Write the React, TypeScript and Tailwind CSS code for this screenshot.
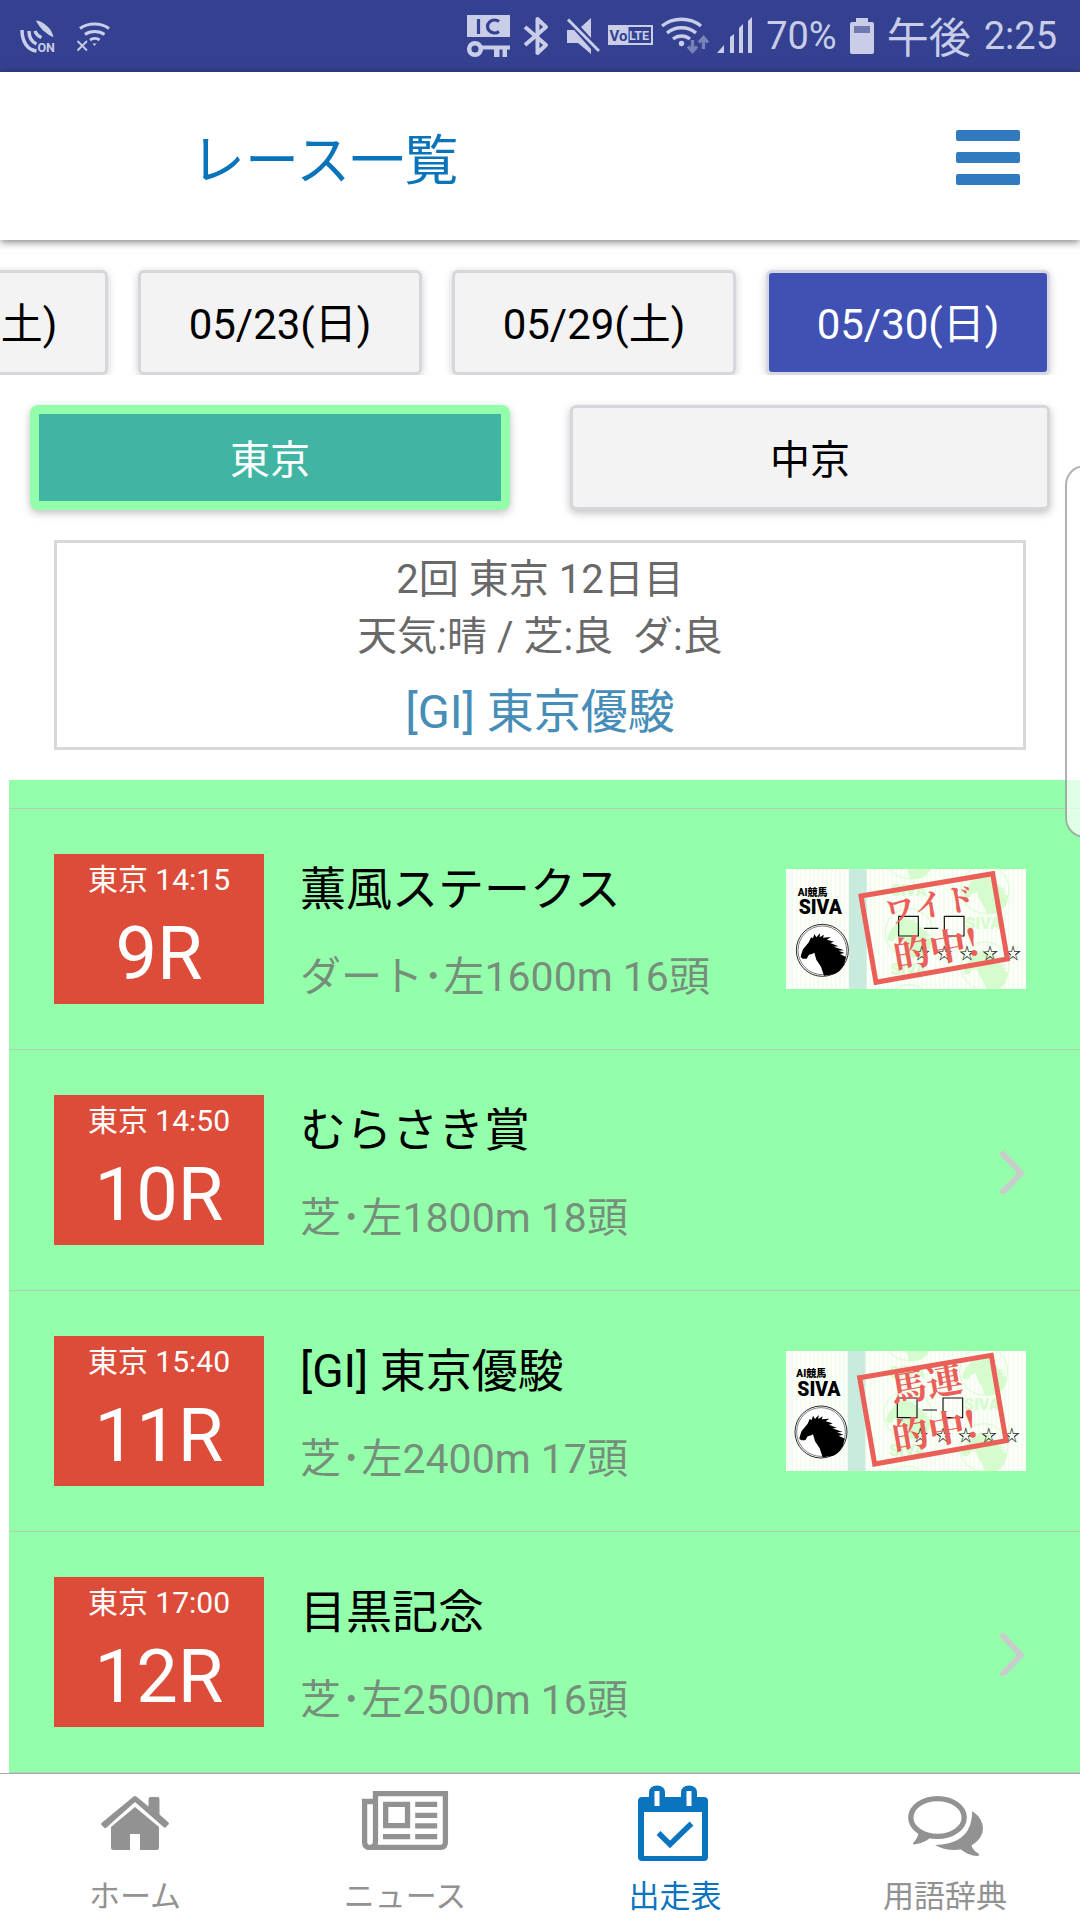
import clsx from "clsx";

const dates = ["05/22(土)", "05/23(日)", "05/29(土)", "05/30(日)"];

const places = ["東京", "中京"];

const races = [
  {
    time: "14:15",
    number: "9R",
    title: "薫風ステークス",
    detail: "ダート･左1600m 16頭",
    hit: "ワイド",
  },
  {
    time: "14:50",
    number: "10R",
    title: "むらさき賞",
    detail: "芝･左1800m 18頭",
  },
  {
    time: "15:40",
    number: "11R",
    title: "[GI] 東京優駿",
    detail: "芝･左2400m 17頭",
    hit: "馬連",
  },
  {
    time: "17:00",
    number: "12R",
    title: "目黒記念",
    detail: "芝･左2500m 16頭",
  },
];

const StatusBar = () => {
  return (
    <div className="flex h-[72px] items-center justify-between bg-[#334190] pr-[23px] pl-5 text-[#c9cde8]">
      <div className="flex items-center gap-5">
        <svg className="h-9 w-9" viewBox="20 19 36 36" fill="currentColor">
          <path d="M36 21.500c8 .5 16 9 17.500 16.500-6-1.500-15-10-17.500-16.500z" />
          <path
            d="M22 31c0 11 5 20 14.500 21M29 32c0 6 3 11 7.500 13M35 32c1 3 3 5 6.500 6.500"
            fill="none"
            stroke="currentColor"
            strokeWidth="3.500"
          />
          <text x="37.500" y="53" fontSize="12.500" fontWeight="700">
            ON
          </text>
        </svg>
        <svg
          className="h-9 w-9"
          viewBox="75 19 36 36"
          fill="none"
          stroke="currentColor"
        >
          <path
            d="M79 29.500c8-6 21-6 29 0M84 35.500c5-4 14-4 19.500 0M89 41c3-2 7-2 9.500 0"
            strokeWidth="3"
          />
          <path d="M91.500 44.500h4l-2 2.500z" fill="currentColor" stroke="none" />
          <path d="M76.500 42l9.500 9.500M86 42l-9.500 9.500" strokeWidth="1.800" />
        </svg>
      </div>
      <div className="flex items-center gap-[13px]">
        <div className="flex items-center gap-2">
          <svg className="h-[44px] w-[46px]" viewBox="466 15 46 44">
            <path d="M466 16h43v22h-43z" fill="currentColor" />
            <path
              d="M477.500 20v15M498 22.500a7 6.500 0 1 0 0 10"
              fill="none"
              stroke="#334190"
              strokeWidth="3.200"
            />
            <circle
              cx="474"
              cy="50"
              r="5.800"
              fill="none"
              stroke="currentColor"
              strokeWidth="4.500"
            />
            <path
              d="M481 46.500h28v4h-3v7.500h-4.500v-7.500h-3v7.500H493v-7.500h-12z"
              fill="currentColor"
            />
          </svg>
          <svg
            className="h-[44px] w-8"
            viewBox="520 15 32 44"
            fill="none"
            stroke="currentColor"
            strokeWidth="4"
            strokeLinejoin="round"
          >
            <path d="M524 28l21 18-8.500 8V20l8.500 8-21 18" />
          </svg>
          <svg
            className="h-[44px] w-[39px]"
            viewBox="560 15 39 44"
            fill="currentColor"
          >
            <path d="M566 31h7l17 19v5L577 44h-11zM580 28l10-9v20z" />
            <path
              d="M567 20.500l31 31.500"
              stroke="currentColor"
              strokeWidth="3"
            />
          </svg>
          <svg className="h-[44px] w-[45px]" viewBox="607 15 45 44">
            <path d="M607 26h45v20h-45z" fill="currentColor" />
            <path d="M627.500 28h22.500v16h-22.500z" fill="#334190" />
            <g fontSize="15" fontWeight="700">
              <text x="608.500" y="41.500" fill="#334190">
                Vo
              </text>
              <text x="628" y="41" fontSize="12.500" fill="currentColor">
                LTE
              </text>
            </g>
          </svg>
          <svg
            className="h-[44px] w-12"
            viewBox="661 15 48 44"
            fill="none"
            stroke="currentColor"
            strokeWidth="3.300"
          >
            <path d="M662 27c11-9 28-9 39 0M667 34c8-7 21-7 29 0M673 40c5-4 12-4 17 0" />
            <circle cx="681.500" cy="44.500" r="2.700" fill="currentColor" stroke="none" />
            <path
              d="M692.500 41v11m-4.500-4.500l4.500 5 4.500-5M703.500 50V39m-4.500 4.500l4.500-5 4.500 5"
              stroke="#7882b8"
            />
          </svg>
          <svg
            className="h-[44px] w-9"
            viewBox="716 15 36 44"
            fill="currentColor"
          >
            <path d="M716 54l7-8v8zM729 38l4-3v19h-4zM738 29l4-4v29h-4zM747 22l4-4v36h-4z" />
          </svg>
        </div>
        <span className="text-[38px]">70%</span>
        <svg className="h-[44px] w-6" viewBox="849 15 24 44">
          <path
            d="M855 19h12v4h4q2 0 2 2v28q0 2-2 2h-20q-2 0-2-2V25q0-2 2-2h4z"
            fill="currentColor"
          />
          <path d="M853 27h16v7h-16z" fill="#6f79b0" />
        </svg>
        <span className="pt-1 text-[42px]">午後</span>
        <span className="text-[38px]">2:25</span>
      </div>
    </div>
  );
};

const Header = () => {
  return (
    <header className="relative z-10 flex h-[168px] items-center justify-between bg-white pr-[60px] pl-[191px] shadow-[0_2px_8px_rgba(0,0,0,0.5)]">
      <h1 className="pt-3 text-[54px] leading-[60px] text-[#0a74bb]">レース一覧</h1>
      <button
        type="button"
        aria-label="メニュー"
        className="flex flex-col gap-[11px] pt-0.5"
      >
        <span className="h-[11px] w-16 rounded-xs bg-[#327abf]" />
        <span className="h-[11px] w-16 rounded-xs bg-[#327abf]" />
        <span className="h-[11px] w-16 rounded-xs bg-[#327abf]" />
      </button>
    </header>
  );
};

const Horse = () => {
  return (
    <path d="M-63 11l5-14 18-22 6-14 6 3 4-13 6 10 11-12-1 12 13-8-3 9 23-2-11 8 21 6-11 4 24 10-14 1 31 11-17 1 19 7-14 3 18 9-6 24q-11 20-28 27l-32 5-9-27-14-21-6-21q-6 4-16 6l-7 12h-12l-6-5z" />
  );
};

const Watermark = () => {
  return (
    <g fill="#d6fccd">
      {[
        [417, 14],
        [417, 248],
        [417, 476],
        [645, 118],
        [645, 348],
      ].map(([x, y]) => (
        <g key={`${x}-${y}`} transform={`translate(${x} ${y})`}>
          <circle r="72" fill="none" stroke="#d6fccd" strokeWidth="3" />
          <Horse />
        </g>
      ))}
      <g fontSize="48" fontWeight="900">
        <text x="362" y="139">SIVA</text>
        <text x="586" y="236">SIVA</text>
        <text x="362" y="374">SIVA</text>
      </g>
    </g>
  );
};

const Ticket = ({ hit }: { hit: string }) => {
  const wide = hit.length > 2;

  return (
    <svg
      className="h-[120px] w-60 shrink-0"
      viewBox="48 57 720 360"
      role="img"
      aria-label={`${hit}的中!`}
    >
      <defs>
        <pattern id="stripes" width="13" height="13" patternUnits="userSpaceOnUse">
          <path d="M0 0h13v13H0z" fill="#fcfffa" />
          <path d="M0 0h4v13H0z" fill="#f1fbea" />
        </pattern>
      </defs>
      <path d="M48 57h720v360H48z" fill="url(#stripes)" />
      <g transform={wide ? undefined : "translate(-4 -1)"}>
        <Watermark />
        <path d="M237 57h53v361h-53z" fill="#c9ebdd" />
        <text x="83" y="137" fontSize="30" fontWeight="900">
          AI競馬
        </text>
        <text x="86" y="192" fontSize="58" fontWeight="900">
          SIVA
        </text>
        <g transform="translate(157 301)">
          <circle r="78" fill="#fff" stroke="#000" strokeWidth="2.500" />
          <circle r="73" fill="none" stroke="#000" strokeWidth="1.500" />
          <Horse />
        </g>
        <g fill="none" stroke="#111" strokeWidth="3.500">
          <path d="M386 199h59v59h-59zM523 199h59v59h-59zM462 235h43" />
        </g>
        <g fontSize="48" textAnchor="middle">
          {[455, 523, 591, 660, 729].map((x) => (
            <text key={x} x={x} y="327">
              ☆
            </text>
          ))}
        </g>
        <path
          d="M273 138l395-67 44 256-394 70z"
          fill="none"
          stroke="#ea5f58"
          strokeWidth="15"
        />
        <g
          fill="#ea5f58"
          fontWeight="700"
          className="font-['Noto_Serif_CJK_JP','Noto_Sans_CJK_JP',serif]"
        >
          {wide ? (
            <text transform="translate(350 222) rotate(-10)" fontSize="92">
              {hit}
            </text>
          ) : (
            <text transform="translate(374 214) rotate(-10)" fontSize="108">
              {hit}
            </text>
          )}
          <text transform="translate(378 358) rotate(-10)" fontSize="110">
            的中!
          </text>
        </g>
      </g>
    </svg>
  );
};

const RaceInfo = () => {
  return (
    <section className="mx-[54px] my-[30px] border-3 border-[#d7d7dc] pt-2 pb-[7px] text-center text-[40px] leading-[57px] text-[#696969]">
      <p>2回 東京 12日目</p>
      <p>天気:晴 / 芝:良&nbsp; ダ:良</p>
      <p className="mt-[18px] text-[47px] text-[#468db8]">[GI] 東京優駿</p>
    </section>
  );
};

const RaceList = () => {
  return (
    <ul className="ml-[9px] border-b border-[#b4cdb9] bg-[#94ffab] pt-7">
      {races.map((race) => (
        <li key={race.number} className="border-t border-[#b4cdb9]">
          <a href="#race" className="flex h-60 items-center pr-[54px] pl-[45px]">
            <div className="flex h-[150px] w-[210px] shrink-0 flex-col items-center bg-[#dd4c39] text-white">
              <span className="mt-1.5 text-[30px] leading-10">東京 {race.time}</span>
              <span className="mt-2.5 text-[74px] leading-[88px]">{race.number}</span>
            </div>
            <div className="ml-9 flex-1 pt-2">
              <p className="text-[46px] leading-[60px] text-black">{race.title}</p>
              <p className="mt-7 text-[41px] leading-[60px] text-[#758f7b]">
                {race.detail}
              </p>
            </div>
            {race.hit ? (
              <Ticket hit={race.hit} />
            ) : (
              <svg
                className="h-12 w-7"
                viewBox="0 0 28 48"
                fill="none"
                stroke="#c7cdca"
                strokeWidth="6"
              >
                <path d="M3 6l20 21L3 48" />
              </svg>
            )}
          </a>
        </li>
      ))}
    </ul>
  );
};

const HomeIcon = () => (
  <svg className="h-20 w-[90px]" viewBox="90 1783 90 80" fill="currentColor">
    <path d="M133 1797q2-2 4 0l11.500 9.500v-7.500q0-2 2-2h7q2 0 2 2v15.500l9 8q1 1 0 2l-2.500 2.500q-1 1-2.500 0L135 1802l-28.500 25.500q-1.500 1-2.500 0l-2.500-2.500q-1-1 0-2z" />
    <path d="M135 1807l24 20v20.500q0 2.500-2.500 2.500H140v-16h-10v16h-16.500q-2.500 0-2.500-2.500V1827z" />
  </svg>
);

const NewsIcon = () => (
  <svg
    className="h-20 w-[90px]"
    viewBox="360 1783 90 80"
    fill="none"
    stroke="currentColor"
    strokeWidth="5.300"
  >
    <path d="M375.500 1793.600h69.900v48.500q0 5.300-5 5.300H370q-5.400 0-5.400-5.500v-40.400h10.900zM375.500 1801v40.500q0 5.900-5.500 5.900" />
    <path d="M385.700 1804.300h21.800v21.400h-21.800zM383 1836.600h27.200M415.200 1804.400h22M415.200 1815.300h22M415.200 1825.800h22M415.200 1836.600h22" />
  </svg>
);

const CalendarIcon = () => (
  <svg className="h-20 w-[90px]" viewBox="630 1783 90 80" fill="none">
    <path
      d="M638 1801q0-4 4-4h62q4 0 4 4v56q0 4-4 4h-62q-4 0-4-4zM644 1812v44h58v-44z"
      fill="currentColor"
      fillRule="evenodd"
    />
    <path
      d="M649 1805v-12q0-7.500 8-7.500t8 7.500v12zM681 1805v-12q0-7.500 8-7.500t8 7.500v12z"
      fill="currentColor"
    />
    <path
      d="M654.500 1791h5v15h-5zM686.500 1791h5v15h-5z"
      fill="#fff"
    />
    <path
      d="M658.500 1833l11.500 11.500 21.500-21"
      stroke="currentColor"
      strokeWidth="5.500"
    />
  </svg>
);

const ChatIcon = () => (
  <svg className="h-20 w-[90px]" viewBox="900 1783 90 80" fill="currentColor">
    <ellipse
      cx="937.500"
      cy="1817.500"
      rx="26.700"
      ry="18.900"
      fill="none"
      stroke="currentColor"
      strokeWidth="5.300"
    />
    <path d="M919 1831q4 2 6.500 1l2.500 2h6q-7 9-20 10.500-2-1 0-2.500 4-4 5-11z" />
    <path d="M972 1811q11 7 11 18 0 9-11.500 16.500 1.500 5 7 8 1.500 2.500-1.500 2.500-8 0-16-6.500-15 2-26-4.500 33-1 36.500-26 1-4 .5-8z" />
  </svg>
);

const tabs = [
  { label: "ホーム", icon: <HomeIcon /> },
  { label: "ニュース", icon: <NewsIcon /> },
  { label: "出走表", icon: <CalendarIcon />, active: true },
  { label: "用語辞典", icon: <ChatIcon /> },
];

const TabBar = () => {
  return (
    <nav className="grid h-[147px] grid-cols-4 border-t border-[#a9aaab] bg-white">
      {tabs.map((tab) => (
        <a
          key={tab.label}
          href="#tab"
          className={clsx(
            "flex flex-col items-center pt-[9px] text-[31px] leading-9",
            tab.active ? "text-[#0a74bf]" : "text-[#929292]"
          )}
        >
          {tab.icon}
          <span className="mt-4">{tab.label}</span>
        </a>
      ))}
    </nav>
  );
};

const App = () => {
  return (
    <div
      lang="ja"
      className="relative overflow-hidden bg-white font-['Roboto','Noto_Sans_CJK_JP',sans-serif]"
    >
      <StatusBar />
      <Header />
      <main>
        <div className="flex justify-end gap-[30px] overflow-hidden pt-[30px] pr-[30px]">
          {dates.map((date, i) => (
            <button
              key={date}
              type="button"
              className={clsx(
                "h-[105px] w-[284px] shrink-0 rounded-md border-3 pt-1 text-[42px] shadow-[0_2px_8px_rgba(0,0,0,0.2)]",
                i === 3
                  ? "border-[#d6d8e6] bg-[#3f51b3] text-white"
                  : "border-[#d6d7db] bg-[#f3f3f3] text-black"
              )}
            >
              {date}
            </button>
          ))}
        </div>
        <div className="grid grid-cols-2 gap-[60px] px-[30px] pt-[30px]">
          {places.map((place, i) => (
            <button
              key={place}
              type="button"
              className={clsx(
                "h-[105px] pt-1.5 text-[40px] shadow-[0_3px_8px_rgba(0,0,0,0.25)]",
                i === 0
                  ? "rounded-lg border-9 border-[#94ffab] bg-[#41b5a4] text-white"
                  : "rounded-md border-3 border-[#d6d7db] bg-[#f3f3f3] text-black"
              )}
            >
              {place}
            </button>
          ))}
        </div>
        <RaceInfo />
        <RaceList />
      </main>
      <TabBar />
      {/* edge panel handle */}
      <div className="absolute top-[465px] -right-[25px] z-20 h-[373px] w-10 rounded-[20px] border-2 border-black/30 bg-white/70" />
    </div>
  );
};

export default App;
